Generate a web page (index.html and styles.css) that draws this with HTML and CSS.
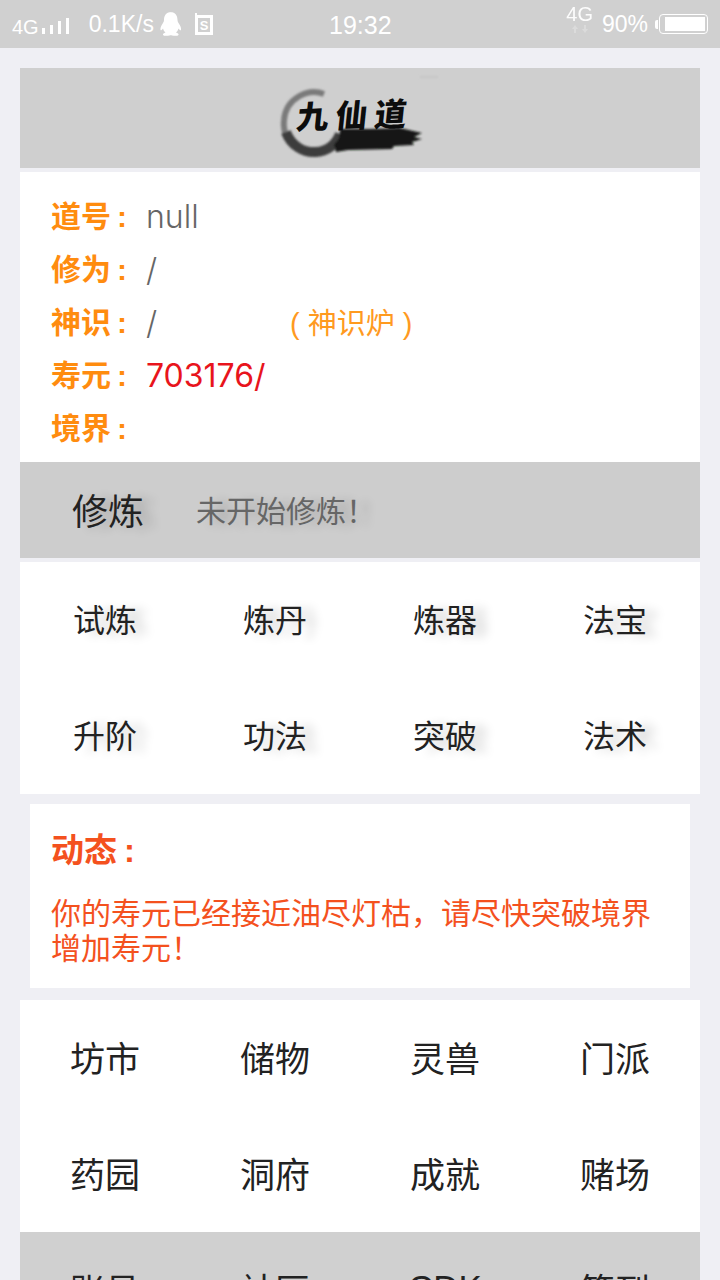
FILE: index.html
```html
<!DOCTYPE html>
<html lang="zh-CN">
<head>
  <meta charset="UTF-8" />
  <meta name="viewport" content="width=device-width, initial-scale=1.0"/>
  <title>九仙道</title>
  <link rel="stylesheet" href="styles.css">
</head>
<body>
  <!-- Status bar -->
  <div class="status-bar">
    <div class="status-left">
      <span class="net">4G</span>
      <svg class="signal" width="30" height="18" viewBox="0 0 30 18">
        <rect x="1" y="11" width="3" height="6" />
        <rect x="9" y="8" width="3" height="9" />
        <rect x="17" y="4" width="3" height="13" />
        <rect x="25" y="1" width="3" height="16" />
      </svg>
      <span class="speed">0.1K/s</span>
      <svg class="qq" width="24" height="26" viewBox="0 0 24 26">
        <path d="M12 1c-5 0-7 4-7 8 0 1-.3 2-1 3-1.500 2-3 5-2.500 7 .4 1 1.500-.2 2.500-1.500.5 2 1.500 3.300 2.500 4-1.500.5-3 1.200-2.500 2.500.5 1 4 1 6.500 .5 1 -.3 1.500-.3 2.500 0 2.500 .5 6 .5 6.500-.5 .5-1.300-1-2-2.500-2.500 1-.7 2-2 2.500-4 1 1.300 2.100 2.500 2.500 1.500 .5-2-1-5-2.500-7-.7-1-1-2-1-3 0-4-2-8-7-8z" />
      </svg>
      <svg class="sim" width="22" height="24" viewBox="0 0 22 24">
        <path d="M2 1h2v2h16v20H2z M5 6v14h12V6z" fill-rule="evenodd" />
        <text x="11" y="18" text-anchor="middle" class="sim-text">S</text>
      </svg>
    </div>
    <div class="status-time">19:32</div>
    <div class="status-right">
      <div class="net-up">
        <span>4G</span>
        <svg width="18" height="8" viewBox="0 0 18 8">
          <path d="M4 0l3 4H5v4H3V4H1zM14 8l-3-4h2V0h2v4h2z" />
        </svg>
      </div>
      <span class="battery-text">90%</span>
      <div class="battery-tip"></div>
      <div class="battery"><div class="battery-fill"></div></div>
    </div>
  </div>

  <div class="main">
    <div class="logo-bar">
      <div class="logo">
        <svg class="logo-ink" width="145" height="70" viewBox="0 0 145 70">
          <defs>
            <filter id="rough"><feGaussianBlur stdDeviation="0.8" /></filter>
          </defs>
          <g filter="url(#rough)" fill="none">
            <path d="M140 -11h18" stroke="#bdbdbd" stroke-width="1" />
            <path d="M44 6C28 0 6 10 4 32c-1 8 1 14 4 20" stroke="#7a7a7a" stroke-width="6" />
            <path d="M6 44c5 14 18 21 30 20 12-1 20-8 24-18" stroke="#3c3c3c" stroke-width="10" />
            <path d="M60 41l30 0 30-1 22 5-8 4 8 2-10 3 2 3-20 1-2 3-44 1-12 2-2-8c6-4 6-10 6-16z" fill="#131813" />
          </g>
        </svg>
        <span class="logo-text">九仙道</span>
      </div>
    </div>

    <div class="info">
      <div class="info-row"><span class="info-label">道号<span class="colon">:</span></span><span class="info-val">null</span></div>
      <div class="info-row"><span class="info-label">修为<span class="colon">:</span></span><span class="info-val">/</span></div>
      <div class="info-row">
        <span class="info-label">神识<span class="colon">:</span></span><span class="info-val info-short">/</span>
        <span class="info-link">( 神识炉 )</span>
      </div>
      <div class="info-row"><span class="info-label">寿元<span class="colon">:</span></span><span class="info-val red">703176/</span></div>
      <div class="info-row"><span class="info-label">境界<span class="colon">:</span></span></div>
    </div>

    <div class="practice">
      <span class="practice-title shadow">修炼</span>
      <span class="practice-state shadow">未开始修炼！</span>
    </div>

    <div class="grid grid-small">
      <div class="cell shadow">试炼</div>
      <div class="cell shadow">炼丹</div>
      <div class="cell shadow">炼器</div>
      <div class="cell shadow">法宝</div>
      <div class="cell shadow">升阶</div>
      <div class="cell shadow">功法</div>
      <div class="cell shadow">突破</div>
      <div class="cell shadow">法术</div>
    </div>

    <div class="news">
      <div class="news-title">动态<span class="colon">:</span></div>
      <p class="news-text">你的寿元已经接近油尽灯枯，请尽快突破境界增加寿元！</p>
    </div>

    <div class="grid grid-big">
      <div class="cell">坊市</div>
      <div class="cell">储物</div>
      <div class="cell">灵兽</div>
      <div class="cell">门派</div>
      <div class="cell">药园</div>
      <div class="cell">洞府</div>
      <div class="cell">成就</div>
      <div class="cell">赌场</div>
    </div>
    <div class="grid grid-big grid-gray">
      <div class="cell">账号</div>
      <div class="cell">社区</div>
      <div class="cell">CDK</div>
      <div class="cell">签到</div>
    </div>
  </div>
</body>
</html>
```

FILE: styles.css
```css
* { margin: 0; padding: 0; box-sizing: border-box; }

html, body {
  height: 1280px;
  overflow: hidden;
}

body {
  font-family: "Liberation Sans", "Noto Sans CJK SC", sans-serif;
  background-color: #efeff4;
  color: #222;
}

/* Status bar */
.status-bar {
  height: 48px;
  background-color: #d0d0d0;
  color: #fff;
  display: flex;
  align-items: center;
  justify-content: space-between;
  padding: 0 12px;
  position: relative;
}

.status-bar svg { fill: #fff; display: block; }

.status-left {
  display: flex;
  align-items: center;
}

.net { font-size: 20px; margin-top: 6px; }
.signal { margin: 3px 0 0 2px; }
.speed { font-size: 23px; margin: 0 0 0 18px; }
.qq { margin: 0 0 0 5px; }
.sim { margin: 0 0 0 10px; }
.sim-text { font-size: 13px; font-weight: bold; }

.status-time {
  position: absolute;
  left: 329px;
  top: 11px;
  font-size: 25px;
}

.status-right {
  display: flex;
  align-items: center;
}

.net-up {
  font-size: 20px;
  line-height: 18px;
  margin: -10px 0 0 2px;
  opacity: 0.95;
}

.net-up svg { fill: #dcdcdc; margin: 2px 0 0 5px; }

.battery-text { font-size: 23px; margin-left: 9px; }

.battery-tip {
  width: 3px;
  height: 9px;
  background-color: #fff;
  border-radius: 2px 0 0 2px;
  margin-left: 7px;
}

.battery {
  width: 49px;
  height: 20px;
  border: 1px solid #fff;
  border-radius: 4px;
  padding: 2px 2px 2px 5px;
  margin-left: 1px;
}

.battery-fill {
  height: 100%;
  background-color: #fff;
}

/* Page */
.main { padding: 20px 20px 0; }

.logo-bar {
  height: 100px;
  background-color: #cfcfcf;
  display: flex;
  justify-content: center;
  margin-bottom: 4px;
}

.logo {
  width: 145px;
  height: 70px;
  position: relative;
  margin: 20px 0 0 -15px;
}

.logo-ink { display: block; overflow: visible; }

.logo-text {
  position: absolute;
  left: 17px;
  top: 5px;
  font-family: "Noto Sans CJK SC", sans-serif;
  font-size: 32px;
  line-height: 40px;
  font-weight: 900;
  letter-spacing: 7px;
  color: #0c0c0c;
  transform: rotate(-2deg) skewX(-8deg);
  white-space: nowrap;
}

.info {
  background-color: #fff;
  padding: 18px 0 7px 31px;
}

.info-row {
  height: 53px;
  display: flex;
  align-items: center;
  font-size: 32px;
}

.info-label {
  width: 95px;
  font-size: 30px;
  font-weight: bold;
  color: #ff8c0f;
  flex-shrink: 0;
  margin-bottom: 6px;
}

.colon { margin-left: 6px; }

.info-val {
  font-family: Inter, "Liberation Sans", sans-serif;
  font-weight: 300;
  color: #666;
}

.info-val.red { color: #e8141c; font-weight: 400; }
.info-short { width: 144px; }

.info-link {
  font-size: 29px;
  color: #ff9a1f;
  margin-bottom: 4px;
}

.practice {
  height: 96px;
  background-color: #cdcdcd;
  display: flex;
  align-items: center;
  padding: 0 0 3px 52px;
  margin-bottom: 4px;
}

.practice-title { font-size: 36px; margin-right: 52px; }
.practice-state { font-size: 30px; color: #666; }

.shadow { text-shadow: 12px 2px 10px rgba(0, 0, 0, 0.17); }

.grid {
  display: grid;
  grid-template-columns: repeat(4, 1fr);
  grid-auto-rows: 116px;
  background-color: #fff;
}

.cell {
  display: flex;
  align-items: center;
  justify-content: center;
  padding-bottom: 4px;
}

.grid-small { font-size: 32px; }
.grid-big { font-size: 35px; }
.grid-gray { background-color: #d0d0d0; }

.news {
  background-color: #fff;
  margin: 10px 10px 12px;
  height: 184px;
  padding: 25px 21px 0;
  color: #f4511e;
}

.news-title {
  font-size: 33px;
  font-weight: bold;
  line-height: 44px;
  margin-bottom: 23px;
}

.news-title .colon { margin-left: 7px; }

.news-text {
  font-size: 30px;
  line-height: 35px;
}
```
